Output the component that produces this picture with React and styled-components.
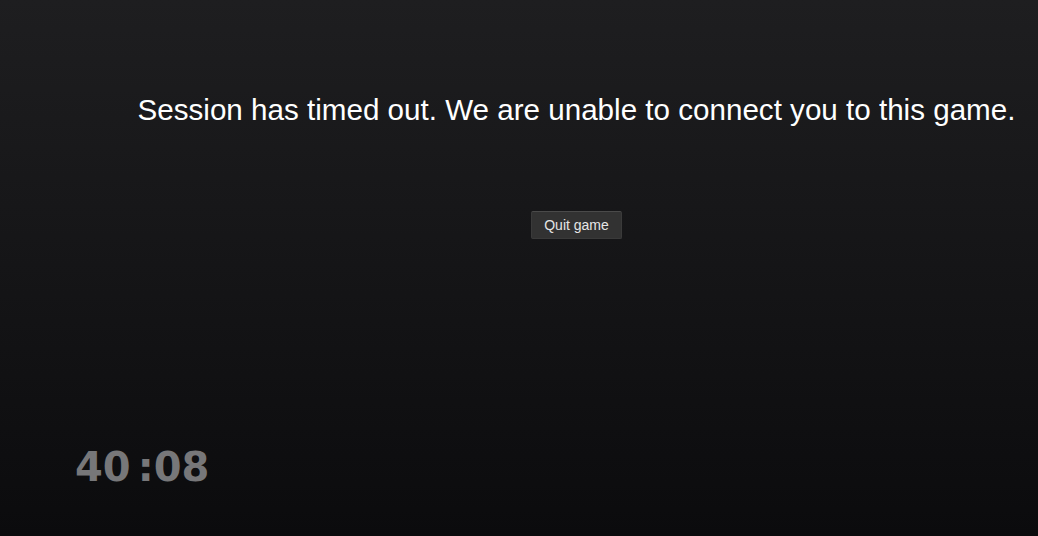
import React from 'react'
import styled, { createGlobalStyle } from 'styled-components'

const GlobalStyle = createGlobalStyle`
   html, body {
      margin: 0;
      padding: 0;
      background: #0c0c0e;
   }
   body {
      font-family: "Liberation Sans", Arial, sans-serif;
   }
`

const Screen = styled.div`
   width: 1038px;
   height: 536px;
   overflow: hidden;
   display: flex;
   flex-direction: column;
   background: linear-gradient(180deg, #1e1e20 0%, #141416 55%, #0b0b0d 100%);
`

const Message = styled.div`
   display: flex;
   flex-direction: column;
   align-items: center;
   padding: 93px 0 0 115px;
   gap: 84px;
`

const Title = styled.h1`
   margin: 0;
   font-size: 29.6px;
   line-height: 34px;
   font-weight: 400;
   color: #ffffff;
   white-space: nowrap;
`

const Button = styled.button`
   height: 28px;
   padding: 0 12px;
   font-family: "Liberation Sans", Arial, sans-serif;
   font-size: 14px;
   color: #e6e6e6;
   background: #323232;
   border: 1px solid #3a3a3a;
   border-top-color: #4a4a4a;
   border-radius: 2px;
   cursor: pointer;

   &:hover {
      background: #3c3c3c;
   }
`

const Footer = styled.div`
   margin-top: auto;
   padding: 0 0 46px 75px;
`

const Timer = styled.div`
   display: flex;
   align-items: baseline;
   font-family: "DejaVu Sans", Verdana, sans-serif;
   font-size: 40px;
   line-height: 46px;
   font-weight: 700;
   color: #777779;
`

const Colon = styled.span`
   margin-left: 7px;
`

const App = () => {
   return (
      <Screen>
         <GlobalStyle />
         <Message>
            <Title>Session has timed out. We are unable to connect you to this game.</Title>
            <Button>Quit game</Button>
         </Message>
         <Footer>
            <Timer>
               <span>40</span>
               <Colon>:</Colon>
               <span>08</span>
            </Timer>
         </Footer>
      </Screen>
   )
}

export default App
